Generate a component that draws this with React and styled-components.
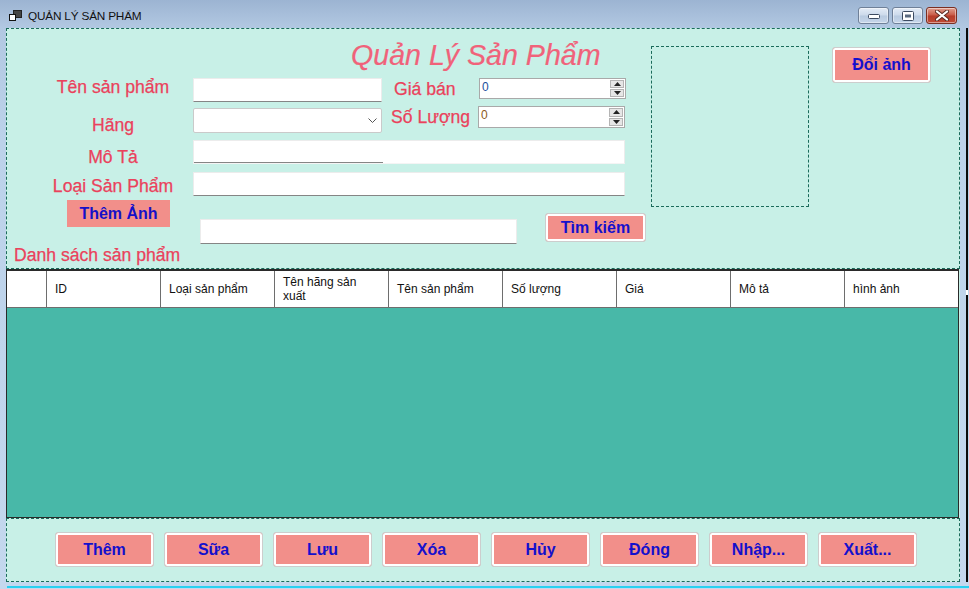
import React from 'react'
import styled, { createGlobalStyle } from 'styled-components'

const GlobalStyle = createGlobalStyle`
  html, body { margin: 0; padding: 0; overflow: hidden; }
  body { font-family: "Liberation Sans", Arial, sans-serif; }
  * { box-sizing: border-box; }
`

const Frame = styled.div`
  width: 969px;
  height: 589px;
  display: flex;
  flex-direction: column;
  overflow: hidden;
  background: linear-gradient(180deg, #9cb4d2 0px, #b2c8e2 28px, #bcd2ea 140px, #c4d8ee 589px);
`

const TitleBar = styled.div`
  height: 28px;
  flex-shrink: 0;
  display: flex;
  align-items: flex-start;
  padding-left: 9px;
  padding-right: 12px;
`

const AppIcon = styled.div`
  margin-top: 10px;
  width: 13px;
  height: 12px;
  display: flex;
`

const TitleText = styled.div`
  margin-top: 10px;
  margin-left: 6px;
  font-size: 11.8px;
  line-height: 13px;
  color: #111;
  letter-spacing: -0.2px;
`

const CaptionGroup = styled.div`
  margin-left: auto;
  margin-top: 7px;
  display: flex;
  gap: 3px;
`

const CaptionButton = styled.div`
  width: 31px;
  height: 17px;
  border-radius: 3px;
  border: 1px solid ${p => (p.$close ? '#7b2f22' : '#6f8098')};
  background: ${p =>
    p.$close
      ? 'linear-gradient(180deg, #e0a090 0%, #c85a46 48%, #b63c2a 52%, #c04a34 100%)'
      : 'linear-gradient(180deg, #e4ecf6 0%, #ccdaeb 48%, #b8cae0 52%, #c6d6ea 100%)'};
  box-shadow: inset 0 0 0 1px rgba(255, 255, 255, 0.45);
  display: flex;
  align-items: center;
  justify-content: center;
`

const Body = styled.div`
  height: 554px;
  display: flex;
  flex-shrink: 0;
`

const LeftEdge = styled.div`
  width: 6px;
  flex-shrink: 0;
`

const RightEdge = styled.div`
  width: 9px;
  flex-shrink: 0;
  display: flex;
  padding-left: 6px;
  padding-right: 1px;
`

const EdgeLine = styled.div`
  flex: 1;
  background: #0a0a0a;
  display: flex;
  flex-direction: column;
  padding-top: 262px;
`

const EdgeNotch = styled.div`
  width: 2px;
  height: 5px;
  background: #fff;
`

const BottomEdge = styled.div`
  height: 7px;
  flex-shrink: 0;
  padding: 4px 0 1px 7px;
  display: flex;
`

const CyanLine = styled.div`
  flex: 1;
  background: #2ad0f0;
`

const Client = styled.div`
  width: 954px;
  display: flex;
  flex-direction: column;
  background: #c8f0e7;
`

const Panel = styled.div`
  height: ${p => p.$h}px;
  flex-shrink: 0;
  border: 1px dashed #1b6b5b;
  display: flex;
`

const LeftForm = styled.div`
  width: 644px;
  display: flex;
  flex-direction: column;
`

const Heading = styled.div`
  height: 49px;
  padding-left: 344px;
  padding-top: 10px;
  font-size: 28.6px;
  line-height: 32px;
  font-style: italic;
  color: #f0627a;
  -webkit-text-stroke: 0.2px #f0627a;
  white-space: nowrap;
`

const labelText = `
  font-size: 17.6px;
  line-height: 20px;
  color: #ea425c;
  -webkit-text-stroke: 0.25px #ea425c;
  white-space: nowrap;
`

const FieldLabel = styled.div`
  width: 154px;
  margin-left: 29px;
  margin-top: ${p => p.$dy || 0}px;
  text-align: center;
  ${labelText}
`

const SideLabel = styled.div`
  width: ${p => p.$w}px;
  margin-left: ${p => p.$ml}px;
  margin-top: ${p => p.$dy || 0}px;
  ${labelText}
`

const ListLabel = styled.div`
  margin-left: 7px;
  ${labelText}
`

const Row = styled.div`
  display: flex;
  align-items: flex-start;
  height: ${p => p.$h}px;
  margin-top: ${p => p.$mt || 0}px;
`

const TextBox = styled.div`
  width: ${p => p.$w}px;
  height: ${p => p.$h || 24}px;
  margin-left: ${p => p.$ml || 3}px;
  margin-top: ${p => p.$mt || 0}px;
  border: 1px solid #ececec;
  border-bottom: 1px solid ${p => (p.$partial ? '#f4f4f4' : '#858585')};
  background: ${p =>
    p.$partial
      ? 'linear-gradient(#858585, #858585) no-repeat left bottom / 189px 1px, #fff'
      : '#fff'};
`

const ComboBox = styled.div`
  width: 189px;
  height: 25px;
  margin-left: 3px;
  margin-top: 2px;
  border: 1px solid #cacaca;
  border-radius: 2px;
  background: #fff;
  display: flex;
  align-items: center;
  justify-content: flex-end;
  padding-right: 4px;
`

const NumBox = styled.div`
  width: 147px;
  height: ${p => p.$h}px;
  border: 1px solid #a9a9a9;
  background: #fff;
  display: flex;
  padding: 1px;
`

const NumValue = styled.div`
  flex: 1;
  font-size: 12px;
  line-height: 14px;
  padding-left: 1px;
  color: ${p => p.$c};
`

const Spinner = styled.div`
  width: 14px;
  display: flex;
  flex-direction: column;
  gap: 1px;
`

const SpinHalf = styled.div`
  flex: 1;
  background: #e6e6e6;
  border: 1px solid #b4b4b4;
  display: flex;
  align-items: center;
  justify-content: center;
`

const FlatButton = styled.div`
  width: 103px;
  height: 27px;
  margin-left: 60px;
  background: #f28f8a;
  color: #1410c8;
  font-size: 16px;
  font-weight: bold;
  display: flex;
  align-items: center;
  justify-content: center;
`

const PinkButton = styled.div`
  width: ${p => p.$w || 99}px;
  height: ${p => p.$h || 35}px;
  margin-left: ${p => p.$ml || 0}px;
  margin-top: ${p => p.$mt || 0}px;
  flex-shrink: 0;
  border: 1px solid #cdcdcd;
  border-radius: 3px;
  box-shadow: inset 0 0 0 2px #fff;
  background: #f28f8a;
  color: #1410cc;
  font-size: 16px;
  font-weight: bold;
  display: flex;
  align-items: center;
  justify-content: center;
  white-space: nowrap;
`

const PictureBox = styled.div`
  width: 158px;
  height: 161px;
  margin-top: 17px;
  border: 1px dashed #1b6b5b;
  flex-shrink: 0;
`

const Grid = styled.div`
  height: 249px;
  flex-shrink: 0;
  margin: 0 1px 0 0;
  border: 1px solid #2a2a2a;
  border-top-width: 2px;
  display: flex;
  flex-direction: column;
  background: #48b8a8;
`

const HeaderRow = styled.div`
  height: 37px;
  background: #fff;
  border-bottom: 1px solid #6e6e6e;
  display: flex;
`

const HeaderCell = styled.div`
  width: ${p => (p.$w ? `${p.$w}px` : 'auto')};
  flex: ${p => (p.$w ? 'none' : 1)};
  border-right: ${p => (p.$last ? 'none' : '1px solid #6e6e6e')};
  display: flex;
  align-items: center;
  padding-left: 8px;
  padding-right: 24px;
  font-size: 12px;
  line-height: 14px;
  color: #111;
`

const ButtonBar = styled.div`
  display: flex;
  gap: 10px;
  padding-left: 48px;
  padding-top: 13px;
`

const columns = ['ID', 'Loại sản phẩm', 'Tên hãng sản xuất', 'Tên sản phẩm', 'Số lượng', 'Giá', 'Mô tả', 'hình ảnh']
const actions = ['Thêm', 'Sữa', 'Lưu', 'Xóa', 'Hủy', 'Đóng', 'Nhập...', 'Xuất...']

const SpinArrow = ({ up }) => (
  <svg width="7" height="4" viewBox="0 0 7 4">
    <path d={up ? 'M0 4 L3.5 0 L7 4 Z' : 'M0 0 L3.5 4 L7 0 Z'} fill="#222" />
  </svg>
)

const NumericField = ({ h, color }) => (
  <NumBox $h={h}>
    <NumValue $c={color}>0</NumValue>
    <Spinner>
      <SpinHalf><SpinArrow up /></SpinHalf>
      <SpinHalf><SpinArrow /></SpinHalf>
    </Spinner>
  </NumBox>
)

const App = () => {
  return (
    <>
      <GlobalStyle />
      <Frame>
        <TitleBar>
          <AppIcon>
            <svg width="13" height="12" viewBox="0 0 13 12">
              <rect x="4.5" y="0.5" width="8" height="7" fill="#444" stroke="#222" />
              <rect x="0.5" y="4.5" width="6" height="6" fill="#fff" stroke="#111" />
            </svg>
          </AppIcon>
          <TitleText>QUẢN LÝ SẢN PHẨM</TitleText>
          <CaptionGroup>
            <CaptionButton>
              <svg width="12" height="6" viewBox="0 0 12 6">
                <rect x="0.5" y="1.5" width="11" height="4" rx="1" fill="#fff" stroke="#3c4a60" />
              </svg>
            </CaptionButton>
            <CaptionButton>
              <svg width="12" height="10" viewBox="0 0 12 10">
                <rect x="0.5" y="0.5" width="11" height="9" rx="1" fill="#fff" stroke="#3c4a60" />
                <rect x="3" y="3.5" width="6" height="3" fill="#5a6a80" />
              </svg>
            </CaptionButton>
            <CaptionButton $close>
              <svg width="14" height="11" viewBox="0 0 14 11">
                <path d="M2 1.5 L12 9.5 M12 1.5 L2 9.5" stroke="#5a2a22" strokeWidth="4" strokeLinecap="round" />
                <path d="M2 1.5 L12 9.5 M12 1.5 L2 9.5" stroke="#fff" strokeWidth="2.2" strokeLinecap="round" />
              </svg>
            </CaptionButton>
          </CaptionGroup>
        </TitleBar>

        <Body>
          <LeftEdge />
          <Client>
            <Panel $h={241}>
              <LeftForm>
                <Heading>Quản Lý Sản Phẩm</Heading>

                <Row $h={24}>
                  <FieldLabel $dy={-1}>Tên sản phẩm</FieldLabel>
                  <TextBox $w={189} />
                  <SideLabel $ml={12} $w={85} $dy={1}>Giá bán</SideLabel>
                  <NumericField h={21} color="#1d4f9c" />
                </Row>

                <Row $h={27} $mt={4}>
                  <FieldLabel $dy={9}>Hãng</FieldLabel>
                  <ComboBox>
                    <svg width="9" height="5" viewBox="0 0 9 5">
                      <path d="M0.5 0.5 L4.5 4.5 L8.5 0.5" fill="none" stroke="#555" />
                    </svg>
                  </ComboBox>
                  <SideLabel $ml={9} $w={87} $dy={1}>Số Lượng</SideLabel>
                  <NumericField h={22} color="#8a5a1a" />
                </Row>

                <Row $h={24} $mt={7}>
                  <FieldLabel $dy={7}>Mô Tả</FieldLabel>
                  <TextBox $w={432} $partial />
                </Row>

                <Row $h={24} $mt={8}>
                  <FieldLabel $dy={4}>Loại Sản Phẩm</FieldLabel>
                  <TextBox $w={432} />
                </Row>

                <Row $h={45} $mt={4}>
                  <FlatButton>Thêm Ảnh</FlatButton>
                  <TextBox $w={317} $h={25} $ml={30} $mt={19} />
                  <PinkButton $w={101} $h={29} $ml={28} $mt={13}>Tìm kiếm</PinkButton>
                </Row>

                <Row $h={20}>
                  <ListLabel>Danh sách sản phẩm</ListLabel>
                </Row>
              </LeftForm>

              <PictureBox />
              <PinkButton $w={99} $h={36} $ml={23} $mt={18}>Đổi ảnh</PinkButton>
            </Panel>

            <Grid>
              <HeaderRow>
                <HeaderCell $w={40} />
                {columns.map((c, i) => (
                  <HeaderCell key={c} $w={i === columns.length - 1 ? 0 : 114} $last={i === columns.length - 1}>
                    {c}
                  </HeaderCell>
                ))}
              </HeaderRow>
            </Grid>

            <Panel $h={64}>
              <ButtonBar>
                {actions.map(a => (
                  <PinkButton key={a}>{a}</PinkButton>
                ))}
              </ButtonBar>
            </Panel>
          </Client>
          <RightEdge>
            <EdgeLine>
              <EdgeNotch />
            </EdgeLine>
          </RightEdge>
        </Body>
        <BottomEdge>
          <CyanLine />
        </BottomEdge>
      </Frame>
    </>
  )
}

export default App
